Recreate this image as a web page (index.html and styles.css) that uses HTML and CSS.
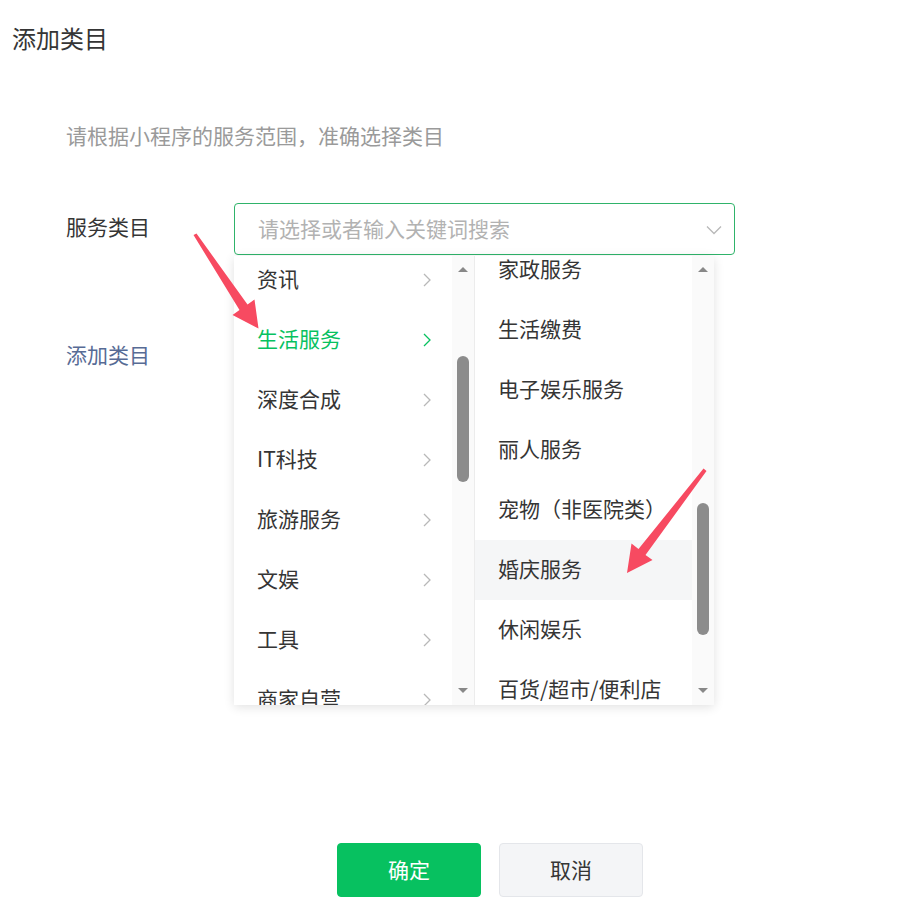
FILE: index.html
```html
<!DOCTYPE html>
<html lang="zh-CN">
<head>
<meta charset="utf-8">
<title>添加类目</title>
<link rel="stylesheet" href="styles.css">
</head>
<body>
<div class="dialog">
  <h1 class="title">添加类目</h1>
  <div class="content">
    <p class="tip">请根据小程序的服务范围，准确选择类目</p>
    <div class="form-row">
      <div class="label">服务类目</div>
      <div class="select">
        <div class="input">
          <span class="placeholder">请选择或者输入关键词搜索</span>
          <svg class="caret" width="16" height="10" viewBox="0 0 16 10"><path d="M1 1.5 L8 8.5 L15 1.5" fill="none" stroke="#b8b8b8" stroke-width="1.3"/></svg>
        </div>
        <div class="dropdown">
          <div class="col col-left">
            <div class="list-wrap">
              <ul class="list list-left">
                <li class="item"><span>资讯</span><svg class="chev" width="8" height="14" viewBox="0 0 8 14"><path d="M1 1 L7 7 L1 13" fill="none" stroke="#b8b8b8" stroke-width="1.3"/></svg></li>
                <li class="item active"><span>生活服务</span><svg class="chev" width="8" height="14" viewBox="0 0 8 14"><path d="M1 1 L7 7 L1 13" fill="none" stroke="#07c160" stroke-width="1.3"/></svg></li>
                <li class="item"><span>深度合成</span><svg class="chev" width="8" height="14" viewBox="0 0 8 14"><path d="M1 1 L7 7 L1 13" fill="none" stroke="#b8b8b8" stroke-width="1.3"/></svg></li>
                <li class="item"><span>IT科技</span><svg class="chev" width="8" height="14" viewBox="0 0 8 14"><path d="M1 1 L7 7 L1 13" fill="none" stroke="#b8b8b8" stroke-width="1.3"/></svg></li>
                <li class="item"><span>旅游服务</span><svg class="chev" width="8" height="14" viewBox="0 0 8 14"><path d="M1 1 L7 7 L1 13" fill="none" stroke="#b8b8b8" stroke-width="1.3"/></svg></li>
                <li class="item"><span>文娱</span><svg class="chev" width="8" height="14" viewBox="0 0 8 14"><path d="M1 1 L7 7 L1 13" fill="none" stroke="#b8b8b8" stroke-width="1.3"/></svg></li>
                <li class="item"><span>工具</span><svg class="chev" width="8" height="14" viewBox="0 0 8 14"><path d="M1 1 L7 7 L1 13" fill="none" stroke="#b8b8b8" stroke-width="1.3"/></svg></li>
                <li class="item"><span>商家自营</span><svg class="chev" width="8" height="14" viewBox="0 0 8 14"><path d="M1 1 L7 7 L1 13" fill="none" stroke="#b8b8b8" stroke-width="1.3"/></svg></li>
              </ul>
            </div>
            <div class="track track-left">
              <i class="arrow-up"></i>
              <i class="thumb"></i>
              <i class="spacer"></i>
              <i class="arrow-down"></i>
            </div>
          </div>
          <div class="col col-right">
            <div class="list-wrap">
              <ul class="list list-right">
                <li class="item"><span>家政服务</span></li>
                <li class="item"><span>生活缴费</span></li>
                <li class="item"><span>电子娱乐服务</span></li>
                <li class="item"><span>丽人服务</span></li>
                <li class="item"><span>宠物（非医院类）</span></li>
                <li class="item hover"><span>婚庆服务</span></li>
                <li class="item"><span>休闲娱乐</span></li>
                <li class="item"><span>百货/超市/便利店</span></li>
              </ul>
            </div>
            <div class="track track-right">
              <i class="arrow-up"></i>
              <i class="thumb"></i>
              <i class="spacer"></i>
              <i class="arrow-down"></i>
            </div>
          </div>
        </div>
      </div>
    </div>
    <a class="add-link">添加类目</a>
  </div>
  <div class="footer">
    <button class="btn btn-primary">确定</button>
    <button class="btn btn-default">取消</button>
  </div>
  <svg class="annotations" width="900" height="921" viewBox="0 0 900 921">
    <polygon fill="#f74a61" points="193.5,235 196.5,233.5 247.5,304.5 254.5,299.5 258.5,328.5 232.5,315 239.5,310"/>
    <polygon fill="#f74a61" points="703.5,468.5 706.5,471 645.5,555 652.5,560 627,573 631.5,543.5 638.5,549"/>
  </svg>
</div>
</body>
</html>
```

FILE: styles.css
```css
* {
  box-sizing: border-box;
}

html, body {
  margin: 0;
  padding: 0;
  background: #ffffff;
}

body {
  font-family: "Noto Sans CJK SC", "Microsoft YaHei", sans-serif;
  color: #353535;
  width: 900px;
  height: 921px;
  overflow: hidden;
}

.dialog {
  position: relative;
  width: 900px;
  height: 921px;
}

.title {
  margin: 0;
  padding: 22px 0 0 12px;
  font-size: 24px;
  line-height: 32px;
  font-weight: normal;
  color: #353535;
}

.content {
  padding-left: 66px;
}

.tip {
  margin: 66px 0 0 0;
  font-size: 21px;
  line-height: 30px;
  color: #9a9a9a;
}

.form-row {
  display: flex;
  align-items: center;
  margin-top: 53px;
}

.label {
  width: 168px;
  padding-bottom: 6px;
  font-size: 21px;
  line-height: 30px;
  color: #353535;
}

.select {
  position: relative;
  width: 501px;
}

.input {
  display: flex;
  align-items: center;
  justify-content: space-between;
  height: 52px;
  padding: 0 12px 2px 23px;
  border: 1px solid #2fb36a;
  border-radius: 4px;
  background: #fff;
}

.placeholder {
  font-size: 21px;
  line-height: 30px;
  color: #b2b2b2;
}

.caret {
  display: block;
  margin-top: 3px;
}

.dropdown {
  position: absolute;
  top: 53px;
  left: 0;
  width: 480px;
  height: 449px;
  display: flex;
  background: #fff;
  box-shadow: 0 2px 10px rgba(0, 0, 0, 0.12);
  z-index: 2;
}

.col {
  display: flex;
  height: 100%;
  overflow: hidden;
}

.col-left {
  width: 241px;
  border-right: 1px solid #ececec;
}

.col-right {
  width: 239px;
}

.list-wrap {
  flex: 1;
  overflow: hidden;
}

.list {
  list-style: none;
  margin: 0;
  padding: 0;
}

.list-left {
  margin-top: -6px;
}

.list-right {
  margin-top: -16px;
}

.item {
  display: flex;
  align-items: center;
  justify-content: space-between;
  height: 60px;
  padding: 0 21px 4px 23px;
  font-size: 21px;
  line-height: 30px;
  color: #353535;
  white-space: nowrap;
}

.item .chev {
  margin-top: 4px;
}

.item.active {
  color: #07c160;
}

.item.hover {
  background: #f5f6f7;
}

.chev {
  display: block;
}

.track {
  display: flex;
  flex-direction: column;
  align-items: center;
  width: 22px;
  height: 100%;
  padding: 11px 0 12px;
  background: #fafafa;
}

.track i {
  display: block;
}

.arrow-up {
  width: 0;
  height: 0;
  border-left: 5px solid transparent;
  border-right: 5px solid transparent;
  border-bottom: 5px solid #888888;
}

.arrow-down {
  width: 0;
  height: 0;
  border-left: 5px solid transparent;
  border-right: 5px solid transparent;
  border-top: 5px solid #888888;
}

.thumb {
  width: 12px;
  border-radius: 6px;
  background: #8c8c8c;
}

.track-left .thumb {
  margin-top: 84px;
  height: 126px;
}

.track-right .thumb {
  margin-top: 231px;
  height: 132px;
}

.spacer {
  flex: 1;
}

.add-link {
  display: block;
  margin-top: 84px;
  font-size: 21px;
  line-height: 30px;
  color: #576b95;
  cursor: pointer;
}

.footer {
  display: flex;
  gap: 18px;
  margin-top: 474px;
  padding-left: 337px;
}

.btn {
  width: 144px;
  height: 54px;
  padding: 0 0 3px;
  border-radius: 4px;
  font-family: "Noto Sans CJK SC", "Microsoft YaHei", sans-serif;
  font-size: 21px;
  line-height: 30px;
  cursor: pointer;
}

.btn-primary {
  background: #07c160;
  border: 1px solid #07c160;
  color: #ffffff;
}

.btn-default {
  background: #f4f5f7;
  border: 1px solid #e4e6ea;
  color: #353535;
}

.annotations {
  position: absolute;
  left: 0;
  top: 0;
  pointer-events: none;
  z-index: 5;
}
```
